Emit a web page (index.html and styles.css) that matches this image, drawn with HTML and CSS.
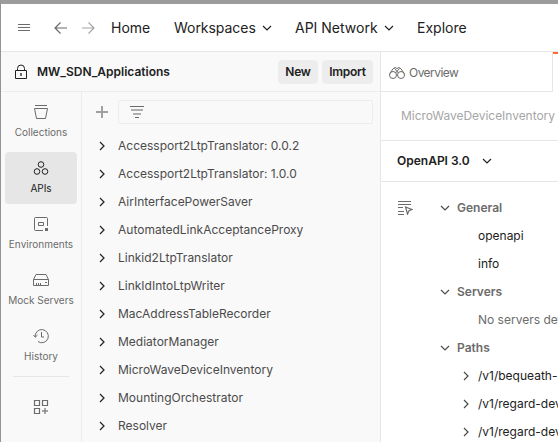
FILE: index.html
```html
<!DOCTYPE html>
<html lang="en">
<head>
<meta charset="utf-8">
<title>MW_SDN_Applications</title>
<link rel="stylesheet" href="styles.css">
</head>
<body>
<svg class="defs" aria-hidden="true">
  <symbol id="down" viewBox="0 0 10 10"><path d="M1 3l4 4 4-4"/></symbol>
  <symbol id="right" viewBox="0 0 10 10"><path d="M3 1l4 4-4 4"/></symbol>
</svg>
<div class="window">
  <header class="topbar">
    <svg class="menu" width="12" height="9" viewBox="0 0 12 9"><path d="M0 1.5h12M0 4.5h12M0 7.5h12"/></svg>
    <svg class="back" width="13" height="12" viewBox="0 0 13 12"><path d="M13 6H1M6.500 .5L1 6l5.500 5.500"/></svg>
    <svg class="forward" width="13" height="12" viewBox="0 0 13 12"><path d="M0 6h12M6.500 .5L12 6l-5.500 5.500"/></svg>
    <nav class="links">
      <a class="home">Home</a>
      <a class="spaces">Workspaces <svg class="chev"><use href="#down"/></svg></a>
      <a class="network">API Network <svg class="chev"><use href="#down"/></svg></a>
      <a>Explore</a>
    </nav>
  </header>
  <div class="body">
    <section class="left">
      <div class="workspace">
        <svg class="lock" width="14" height="16" viewBox="0 0 14 16"><path d="M1.5 6.5h11v8h-11zM3.5 6.500V4.500a3.500 3.500 0 0 1 7 0v2"/><path class="hole" d="M7 9v3"/></svg>
        <strong>MW_SDN_Applications</strong>
        <button class="new">New</button><button class="import">Import</button>
      </div>
      <div class="panes">
        <nav class="rail">
          <a class="item"><svg width="16" height="16" viewBox="0 0 16 16"><path d="M2 1.500h12M1.500 4.500h13L12.500 14.500h-9z"/></svg>Collections</a>
          <a class="item active"><svg width="16" height="16" viewBox="0 0 16 16"><circle cx="8" cy="4.500" r="2.800"/><circle cx="4" cy="11.500" r="2.800"/><circle cx="12" cy="11.500" r="2.800"/></svg>APIs</a>
          <a class="item"><svg width="16" height="16" viewBox="0 0 16 16"><path d="M10 14.500H2.500a1 1 0 0 1-1-1v-11a1 1 0 0 1 1-1h11a1 1 0 0 1 1 1V10M5.500 6.500h5v3h-5z"/><path class="solid" d="M12 12h3v3h-3z"/></svg>Environments</a>
          <a class="item"><svg width="16" height="16" viewBox="0 0 16 16"><path d="M.5 7.500h15v6h-15zM.5 7.500L3 2.500h10l2.500 5M3.500 14v-3M5.500 14v-3M7.500 14v-3M12 10.500h2"/></svg>Mock Servers</a>
          <a class="item"><svg width="16" height="16" viewBox="0 0 16 16"><path d="M2.200 9A6.600 6.600 0 1 1 5 13.600M.5 7l1.800 2.200L4.500 7M8.500 4v5H11"/></svg>History</a>
          <hr>
          <svg class="more" width="16" height="16" viewBox="0 0 16 16"><path d="M1.500 1.500h5v5h-5zM9.500 1.500h5v5h-5zM1.500 9.500h5v5h-5z"/><path class="add" d="M12 9v6M9 12h6"/></svg>
        </nav>
        <div class="apis">
          <div class="tools">
            <svg class="plus" width="12" height="12" viewBox="0 0 12 12"><path d="M6 0v12M0 6h12"/></svg>
            <div class="filter"><svg width="14" height="13" viewBox="0 0 14 13"><path d="M0 .5h14M5 11.500h4"/><path class="soft" d="M1 4h12M3 8h8"/></svg></div>
          </div>
          <ul>
            <li><svg class="chev"><use href="#right"/></svg>Accessport2LtpTranslator: 0.0.2</li>
            <li><svg class="chev"><use href="#right"/></svg>Accessport2LtpTranslator: 1.0.0</li>
            <li><svg class="chev"><use href="#right"/></svg>AirInterfacePowerSaver</li>
            <li><svg class="chev"><use href="#right"/></svg>AutomatedLinkAcceptanceProxy</li>
            <li><svg class="chev"><use href="#right"/></svg>Linkid2LtpTranslator</li>
            <li><svg class="chev"><use href="#right"/></svg>LinkIdIntoLtpWriter</li>
            <li><svg class="chev"><use href="#right"/></svg>MacAddressTableRecorder</li>
            <li><svg class="chev"><use href="#right"/></svg>MediatorManager</li>
            <li><svg class="chev"><use href="#right"/></svg>MicroWaveDeviceInventory</li>
            <li><svg class="chev"><use href="#right"/></svg>MountingOrchestrator</li>
            <li><svg class="chev"><use href="#right"/></svg>Resolver</li>
          </ul>
        </div>
      </div>
    </section>
    <main class="editor">
      <div class="tabs">
        <div class="tab"><svg width="16" height="14" viewBox="0 0 16 14"><circle cx="4" cy="9" r="3.500"/><circle cx="12" cy="9" r="3.500"/><path d="M.8 7.500L4 2.800Q6 .5 8 2.500Q10 .5 12 2.800L15.200 7.500M5.500 2.500L9.500 7M10.500 2.500L6.500 7"/></svg>Overview</div>
        <div class="current"></div>
      </div>
      <div class="crumb">MicroWaveDeviceInventory</div>
      <div class="version">OpenAPI 3.0 <svg class="chev"><use href="#down"/></svg></div>
      <div class="outline">
        <svg class="select" width="15" height="15" viewBox="0 0 15 15"><path d="M0 1.500h13M0 4.500h13M0 7.500h5M0 11.500h6M0 14.500h6"/><path class="pointer" d="M7.500 7l6.500 2.500-3 1.200L9.500 14z"/></svg>
        <div class="tree">
          <div class="group"><svg class="chev"><use href="#down"/></svg>General</div>
          <div class="leaf">openapi</div>
          <div class="leaf">info</div>
          <div class="group"><svg class="chev"><use href="#down"/></svg>Servers</div>
          <div class="leaf muted">No servers defined</div>
          <div class="group"><svg class="chev"><use href="#down"/></svg>Paths</div>
          <div class="path"><svg class="chev"><use href="#right"/></svg>/v1/bequeath-</div>
          <div class="path"><svg class="chev"><use href="#right"/></svg>/v1/regard-device</div>
          <div class="path"><svg class="chev"><use href="#right"/></svg>/v1/regard-device</div>
        </div>
      </div>
    </main>
  </div>
</div>
</body>
</html>
```
FILE: styles.css
```css
* { box-sizing: border-box; }
body { margin: 0; height: 442px; overflow: hidden; font: 12px/16px Inter, "Liberation Sans", sans-serif; color: #212121; background: #fff; }
svg { fill: none; stroke: #6b6b6b; flex: none; }
.defs { position: absolute; width: 0; height: 0; }
.chev { width: 10px; height: 10px; stroke: #212121; stroke-width: 1.2; }
.window { height: 442px; display: flex; flex-direction: column; border-top: 4px solid #9c9c9c; border-left: 1px solid #949494; }
.topbar { height: 48px; flex: none; display: flex; align-items: center; padding-left: 17px; border-bottom: 1px solid #e6e6e6; font-size: 14px; }
.back { margin-left: 24px; stroke-width: 1.2; }
.forward { margin: 0 16px 0 15px; stroke: #a6a6a6; stroke-width: 1.2; }
.links { display: flex; white-space: nowrap; }
.links a { display: flex; align-items: center; justify-content: space-between; }
.links .home { width: 63px; }
.links .spaces { width: 98px; margin-right: 23px; letter-spacing: -0.04px; }
.links .network { width: 99px; margin-right: 23px; }
.body { flex: 1; min-height: 0; display: grid; grid-template-columns: 380px 1fr; }
.left { display: flex; flex-direction: column; min-height: 0; background: #f9f9f9; border-right: 1px solid #e6e6e6; }
.workspace { height: 40px; flex: none; display: flex; align-items: center; padding: 0 7px 0 13px; border-bottom: 1px solid #ededed; }
.lock { stroke: #212121; margin-right: 9px; }
.lock .hole { stroke: #6b6b6b; stroke-width: 2; }
.workspace strong { font-weight: 600; flex: 1; }
button { height: 24px; border: 0; border-radius: 4px; background: #ededed; color: #212121; font: 600 12px/16px Inter, sans-serif; letter-spacing: -0.25px; padding: 0; }
.new { width: 40px; margin-right: 4px; }
.import { width: 51px; }
.panes { flex: 1; min-height: 0; display: grid; grid-template-columns: 81px 1fr; }
.rail { border-right: 1px solid #ededed; padding: 4px 4px 0; display: flex; flex-direction: column; align-items: center; gap: 4px; }
.item { width: 72px; height: 52px; flex: none; display: flex; flex-direction: column; align-items: center; gap: 4px; padding-top: 8px; border-radius: 4px; font-size: 10px; color: #6b6b6b; white-space: nowrap; }
.item.active { background: #e6e6e6; color: #212121; }
.active svg { stroke: #212121; }
.solid { fill: #6b6b6b; stroke: none; }
.rail hr { width: 56px; height: 1px; margin: 0; border: 0; background: #e6e6e6; flex: none; }
.more { margin-top: 18px; stroke-width: 1.2; }
.add { stroke: #8a8a8a; stroke-width: 1.5; }
.apis { padding-top: 8px; }
.tools { height: 24px; display: flex; align-items: center; padding: 0 7px 0 14px; }
.plus { margin-right: 10px; stroke: #a0a0a0; stroke-width: 2; }
.filter { flex: 1; height: 24px; border: 1px solid #ededed; border-radius: 2px; padding-left: 11px; display: flex; align-items: center; }
.soft { stroke: #b0b0b0; stroke-width: 2; }
ul { list-style: none; margin: 8px 0 0; padding: 0; }
li { height: 28px; display: flex; align-items: center; gap: 11px; padding-left: 15px; color: #4b4b4b; }
.editor { min-width: 0; overflow: hidden; white-space: nowrap; display: flex; flex-direction: column; }
.tabs { height: 40px; flex: none; display: flex; }
.tab { width: 172px; display: flex; align-items: center; gap: 4px; padding: 3px 0 0 8px; color: #6b6b6b; letter-spacing: -0.55px; border-right: 1px solid #e6e6e6; border-bottom: 1px solid #e6e6e6; }
.current { flex: 1; border-top: 2px solid #ff6c37; }
.crumb { height: 49px; flex: none; padding: 16px 0 0 20px; color: #a6a6a6; letter-spacing: -0.04px; border-bottom: 1px solid #e6e6e6; }
.version { height: 41px; flex: none; display: flex; align-items: center; gap: 12px; padding-left: 16px; font-weight: 600; border-bottom: 1px solid #e6e6e6; }
.outline { display: flex; padding: 12px 0 0 17px; }
.outline .chev { stroke: #4b4b4b; }
.select { margin: 6px 27px 0 0; }
.pointer { stroke-width: 1.2; }
.tree > div { height: 28px; display: flex; align-items: center; }
.tree .group { gap: 7px; font-weight: 600; color: #6b6b6b; }
.tree .leaf { padding-left: 38px; }
.tree .muted { color: #6b6b6b; }
.tree .path { gap: 7px; padding-left: 21px; }
```
